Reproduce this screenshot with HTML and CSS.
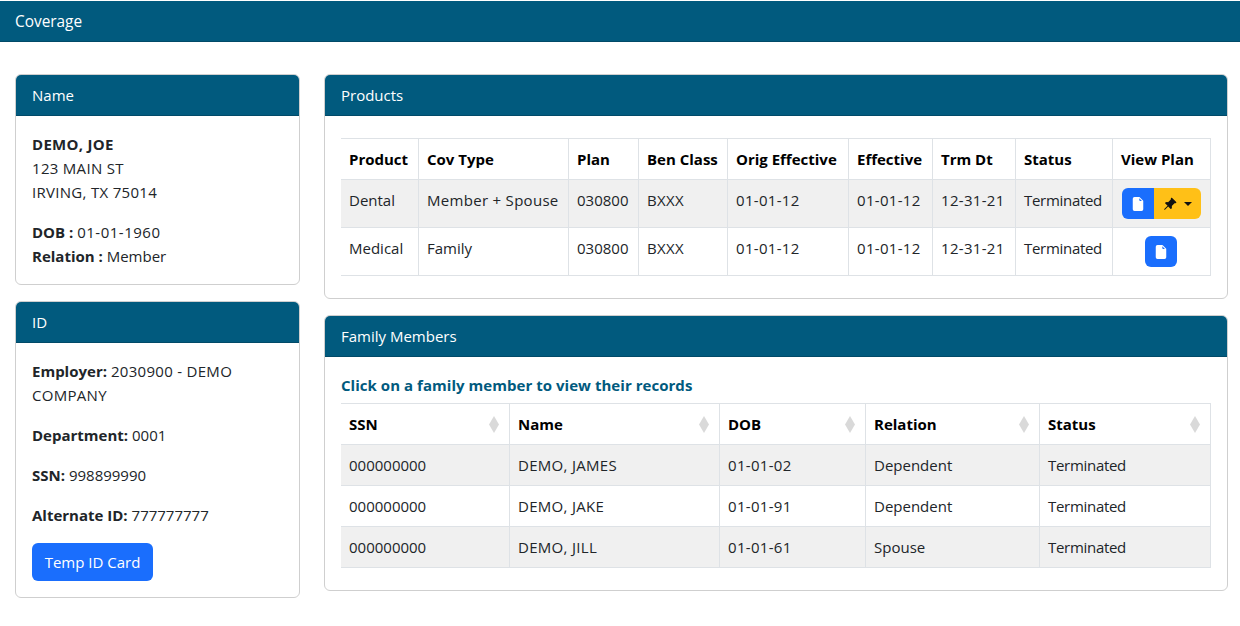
FILE: index.html
```html
<!DOCTYPE html>
<html lang="en">
<head>
<meta charset="utf-8">
<title>Coverage</title>
<link rel="stylesheet" href="styles.css">
</head>
<body>
<header class="topbar">Coverage</header>
<main class="layout">
  <aside class="side">
    <section class="card">
      <h2 class="card-head">Name</h2>
      <div class="card-body">
        <p class="para"><b class="cap">DEMO, JOE</b><br><span class="cap">123 MAIN ST</span><br><span class="cap">IRVING, TX 75014</span></p>
        <p class="para"><b>DOB :</b> <span class="date">01-01-1960</span><br><b>Relation :</b> Member</p>
      </div>
    </section>
    <section class="card">
      <h2 class="card-head">ID</h2>
      <div class="card-body">
        <p class="para"><b>Employer:</b> <span class="cap">2030900 - DEMO</span> <span class="cap">COMPANY</span></p>
        <p class="para"><b>Department:</b> 0001</p>
        <p class="para"><b>SSN:</b> 998899990</p>
        <p class="para"><b>Alternate ID:</b> 777777777</p>
        <button class="btn btn-temp">Temp ID Card</button>
      </div>
    </section>
  </aside>
  <div class="content">
    <section class="card">
      <h2 class="card-head">Products</h2>
      <div class="card-body products-body">
        <table class="tbl">
          <colgroup><col class="p1"><col class="p2"><col class="p3"><col class="p4"><col class="p5"><col class="p6"><col class="p7"><col class="p8"><col class="p9"></colgroup>
          <thead><tr><th>Product</th><th>Cov Type</th><th>Plan</th><th>Ben Class</th><th>Orig Effective</th><th>Effective</th><th>Trm Dt</th><th>Status</th><th>View Plan</th></tr></thead>
          <tbody>
            <tr class="odd tall"><td>Dental</td><td class="cap">Member + Spouse</td><td>030800</td><td class="cap">BXXX</td><td class="cap">01-01-12</td><td class="cap">01-01-12</td><td class="cap">12-31-21</td><td class="term">Terminated</td>
              <td class="actions"><span class="group"><button class="btn icon-btn joined-l" aria-label="View plan"><svg class="ico" viewBox="0 0 16 16"><path d="M4 0h5.293A1 1 0 0 1 10 .293L13.707 4a1 1 0 0 1 .293.707V14a2 2 0 0 1-2 2H4a2 2 0 0 1-2-2V2a2 2 0 0 1 2-2zm5.5 1.5v2a1 1 0 0 0 1 1h2l-3-3z"/></svg></button><button class="btn pin-btn joined-r" aria-label="Pin"><svg class="pin" viewBox="0 0 16 16"><path d="M9.828.722a.5.5 0 0 1 .354.146l4.95 4.95a.5.5 0 0 1 0 .707c-.48.48-1.072.588-1.503.588-.177 0-.335-.018-.46-.039l-3.134 3.134a5.927 5.927 0 0 1 .16 1.013c.046.702-.032 1.687-.72 2.375a.5.5 0 0 1-.707 0l-2.829-2.828-3.182 3.182c-.195.195-1.219.902-1.414.707-.195-.195.512-1.22.707-1.414l3.182-3.182-2.828-2.829a.5.5 0 0 1 0-.707c.688-.688 1.673-.767 2.375-.72a5.922 5.922 0 0 1 1.013.16l3.134-3.133a2.772 2.772 0 0 1-.04-.461c0-.43.108-1.022.589-1.503a.5.5 0 0 1 .353-.146z"/></svg><span class="caret"></span></button></span></td></tr>
            <tr class="tall"><td>Medical</td><td>Family</td><td>030800</td><td class="cap">BXXX</td><td class="cap">01-01-12</td><td class="cap">01-01-12</td><td class="cap">12-31-21</td><td class="term">Terminated</td>
              <td class="actions"><button class="btn icon-btn single" aria-label="View plan"><svg class="ico" viewBox="0 0 16 16"><path d="M4 0h5.293A1 1 0 0 1 10 .293L13.707 4a1 1 0 0 1 .293.707V14a2 2 0 0 1-2 2H4a2 2 0 0 1-2-2V2a2 2 0 0 1 2-2zm5.5 1.5v2a1 1 0 0 0 1 1h2l-3-3z"/></svg></button></td></tr>
          </tbody>
        </table>
      </div>
    </section>
    <section class="card">
      <h2 class="card-head">Family Members</h2>
      <div class="card-body family-body">
        <p class="hint">Click on a family member to view their records</p>
        <table class="tbl">
          <colgroup><col class="f1"><col class="f2"><col class="f3"><col class="f4"><col class="f5"></colgroup>
          <thead><tr><th class="sort">SSN</th><th class="sort">Name</th><th class="sort">DOB</th><th class="sort">Relation</th><th class="sort">Status</th></tr></thead>
          <tbody>
            <tr class="odd"><td>000000000</td><td class="cap">DEMO, JAMES</td><td class="cap">01-01-02</td><td>Dependent</td><td class="term">Terminated</td></tr>
            <tr><td>000000000</td><td class="cap">DEMO, JAKE</td><td class="cap">01-01-91</td><td>Dependent</td><td class="term">Terminated</td></tr>
            <tr class="odd"><td>000000000</td><td class="cap">DEMO, JILL</td><td class="cap">01-01-61</td><td>Spouse</td><td class="term">Terminated</td></tr>
          </tbody>
        </table>
      </div>
    </section>
  </div>
</main>
</body>
</html>
```
FILE: styles.css
```css
* { box-sizing: border-box; }
html, body { margin: 0; padding: 0; }
body {
  font-family: "Open Sans", "Noto Sans", sans-serif;
  font-size: 15px;
  line-height: 24px;
  color: #212529;
  background: #fff;
  overflow: hidden;
}
.topbar {
  margin-top: 1px;
  height: 41px;
  padding: 9px 15px 7px;
  background: #015a7e;
  color: #fff;
  font-size: 15.4px;
  border-bottom: 1px solid #014a68;
}
.layout {
  display: flex;
  gap: 24px;
  padding: 32px 12px 0 15px;
}
.side { width: 285px; flex: none; display: flex; flex-direction: column; gap: 16px; }
.content { flex: 1; display: flex; flex-direction: column; gap: 16px; }
.card {
  border: 1px solid #cfcfcf;
  border-radius: 6px;
  background: #fff;
  overflow: hidden;
}
.card-head {
  margin: 0;
  height: 41px;
  padding: 8px 16px;
  font-size: 15px;
  font-weight: 400;
  line-height: 24px;
  background: #015a7e;
  color: #fff;
  border-bottom: 1px solid #014a68;
}
.card-body { padding: 16px; }
.para { margin: 0 0 16px; }
.para:last-child { margin-bottom: 0; }
.cap { letter-spacing: .3px; }
.date { letter-spacing: .5px; }
.term { letter-spacing: -.3px; }
.btn {
  border: 0;
  font: inherit;
  color: #fff;
  background: #1a6efd;
  border-radius: 6px;
  cursor: pointer;
}
.btn-temp { display: block; width: 121px; height: 38px; padding: 0; }
.products-body { padding: 22px 16px; }
.family-body { padding: 16px 16px 22px; }
.hint { margin: 0 0 6px; font-weight: 700; font-size: 15px; letter-spacing: .04px; color: #015a7e; }
.tbl {
  width: 870px;
  table-layout: fixed;
  border-collapse: separate;
  border-spacing: 0;
  color: #212529;
}
.tbl th, .tbl td {
  border-right: 1px solid #dee2e6;
  border-bottom: 1px solid #dee2e6;
  padding: 8px;
  text-align: left;
  vertical-align: top;
  font-weight: 400;
}
.tbl th { font-weight: 700; color: #000; border-top: 1px solid #dee2e6; }
.tbl .odd td { background: #f0f0f0; }
.tall td { height: 48px; }
.tbl .actions { text-align: center; }
.group { display: inline-flex; vertical-align: top; }
.icon-btn, .pin-btn {
  height: 31px;
  display: inline-flex;
  align-items: center;
  justify-content: center;
  vertical-align: top;
  padding: 0;
}
.icon-btn { width: 32px; }
.single { margin-right: 1px; }
.pin-btn { width: 47px; background: #ffc017; gap: 7px; }
.joined-l { border-radius: 6px 0 0 6px; }
.joined-r { border-radius: 0 6px 6px 0; }
.ico { width: 14px; height: 14px; fill: #fff; }
.pin { width: 14px; height: 14px; fill: #111; }
.caret { width: 0; height: 0; border: 4px solid transparent; border-top-color: #111; border-bottom: 0; }
.sort { position: relative; }
.sort::after {
  content: "";
  position: absolute;
  right: 10px;
  top: 12px;
  width: 10px;
  height: 17px;
  background: #d9d9d9;
  clip-path: polygon(50% 0, 100% 50%, 50% 100%, 0 50%);
}
.p1 { width: 78px; } .p2 { width: 150px; } .p3 { width: 70px; } .p4 { width: 89px; } .p5 { width: 121px; }
.p6 { width: 84px; } .p7 { width: 83px; } .p8 { width: 97px; } .p9 { width: 98px; }
.f1 { width: 169px; } .f2 { width: 210px; } .f3 { width: 146px; } .f4 { width: 174px; } .f5 { width: 171px; }
```
